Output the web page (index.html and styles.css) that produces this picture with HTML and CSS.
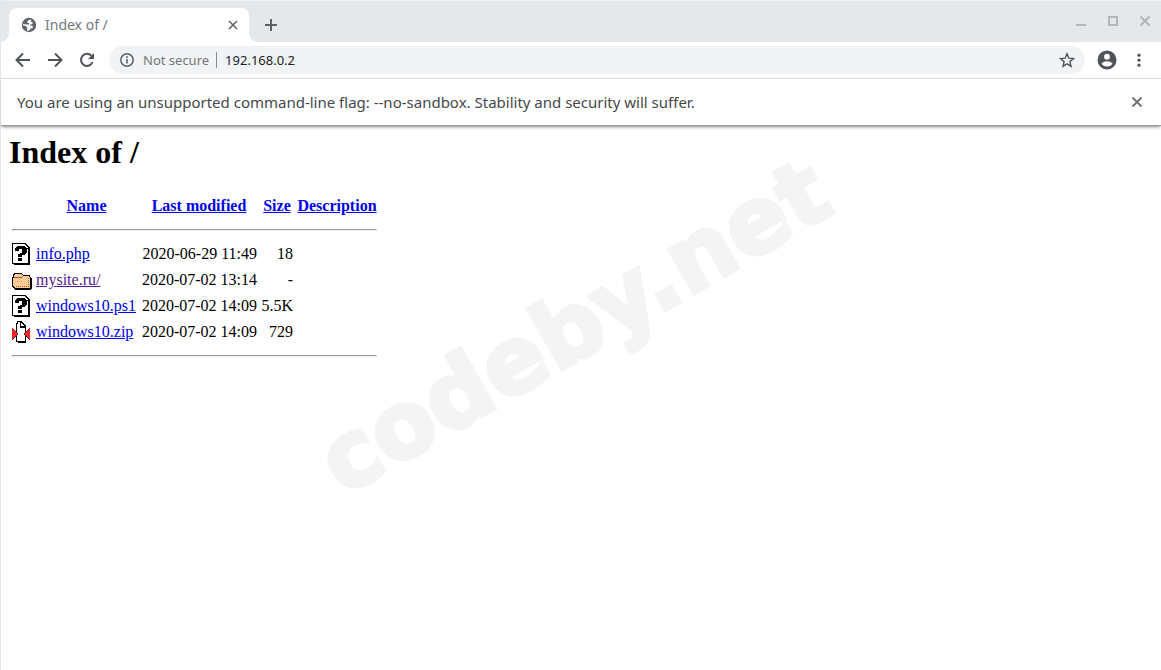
FILE: index.html
```
<!DOCTYPE html>
<html lang="en">
<head>
  <meta charset="UTF-8">
  <meta name="viewport" content="width=device-width, initial-scale=1.0">
  <title>Index of /</title>
  <link rel="stylesheet" href="styles.css">
</head>
<body>
  <svg class="symbols" aria-hidden="true">
    <symbol id="unknown" viewBox="0 0 20 22">
      <path d="M0 0h13l5 5v17H2v-1H0z" fill="#000"/>
      <path d="M1 1h12v5h3v14H1z" fill="#fff"/>
      <path d="M13 2v3h3z" fill="#fff"/>
      <path d="M3 8V5l2-2h7l3 3v4l-3 2h-2v2H6v-3l3-1 1-1V6H7v2zM6 15h4v3H6z" fill="#000"/>
    </symbol>
    <symbol id="folder" viewBox="0 0 20 22">
      <path d="M2 4h7l2 2h7v2l2 1v10l-2 2H3l-3-3V8h1V5z" fill="#000"/>
      <path d="M3 5h6l2 2h6v2H2V6z" fill="#fc9"/>
      <path d="M1 9h8l2-1h7v10l-1 1H3l-2-2z" fill="#fc9"/>
      <path d="M2 8.500h7l2-1" fill="none" stroke="#963"/>
      <path d="M4 17.500h13M16.500 9v8" fill="none" stroke="#963" stroke-dasharray="1 1"/>
      <path d="M5 12.500h2M9 12.500h2" stroke="#c96" stroke-dasharray="1 1"/>
    </symbol>
    <symbol id="compressed" viewBox="0 0 20 22">
      <path d="M4 2h1V0h4l5 5v16l-1 1H6v-1H4z" fill="#000"/>
      <path d="M5 3h1V1h2v6h5v13H5z" fill="#fff"/>
      <path d="M9 2v3h3z" fill="#fff"/>
      <path d="M0 7l7 6-7 6zM18 7l-7 6 7 6z" fill="#622"/>
      <path d="M0 8l6 5-6 5zM18 8l-6 5 6 5z" fill="#f22"/>
    </symbol>
  </svg>

  <div class="browser">
    <header class="tab-strip">
      <div class="tab">
        <svg class="favicon" viewBox="0 0 16 16" width="16" height="16">
          <circle cx="8" cy="8" r="7.2" fill="#5f6368"/>
          <path d="M9.500 2.200 6.600 4l-.4 1.600 1.800.6v1.400H4.800L2 6.800v1.400l2.600.8 1.600 1.400L6 13.800h2l1.600-2.200h1.600L12 9.800l-1-1.200H8.600l.6-1.200 1.800-.2 1-1.600-1.600-.6z" fill="#fff"/>
        </svg>
        <span class="tab-title">Index of /</span>
        <button class="icon-button" aria-label="Close tab">
          <svg viewBox="0 0 16 16" width="16" height="16"><path d="M4 4l8 8M12 4l-8 8" stroke="#5f6368" stroke-width="1.6"/></svg>
        </button>
      </div>
      <button class="icon-button new-tab" aria-label="New tab">
        <svg viewBox="0 0 16 16" width="16" height="16"><path d="M8 2v12M2 8h12" stroke="#5f6368" stroke-width="2"/></svg>
      </button>
      <div class="window-buttons">
        <button class="icon-button" aria-label="Minimize">
          <svg viewBox="0 0 16 16" width="16" height="16"><path d="M3 12h10" stroke="#b3b6b8" stroke-width="2"/></svg>
        </button>
        <button class="icon-button" aria-label="Maximize">
          <svg viewBox="0 0 16 16" width="16" height="16"><path d="M4 4h8v8H4z" fill="none" stroke="#b3b6b8" stroke-width="2"/></svg>
        </button>
        <button class="icon-button" aria-label="Close window">
          <svg viewBox="0 0 16 16" width="16" height="16"><path d="M3.5 3.5l9 9M12.5 3.5l-9 9" stroke="#b3b6b8" stroke-width="2"/></svg>
        </button>
      </div>
    </header>

    <div class="toolbar">
      <button class="icon-button" aria-label="Back">
        <svg viewBox="0 0 16 16" width="16" height="16"><path d="M15 8H2M8 1.5 1.5 8 8 14.5" fill="none" stroke="#50545a" stroke-width="2"/></svg>
      </button>
      <button class="icon-button" aria-label="Forward">
        <svg viewBox="0 0 16 16" width="16" height="16"><path d="M1 8h13M8 1.5 14.5 8 8 14.5" fill="none" stroke="#50545a" stroke-width="2"/></svg>
      </button>
      <button class="icon-button" aria-label="Reload">
        <svg viewBox="0 0 16 16" width="16" height="16"><path d="M13.6 10A6 6 0 1 1 12.4 3.8" fill="none" stroke="#50545a" stroke-width="2"/><path d="M15 1v6H9z" fill="#50545a"/></svg>
      </button>
      <div class="address-bar">
        <svg viewBox="0 0 16 16" width="16" height="16"><circle cx="8" cy="8" r="6.2" fill="none" stroke="#5f6368" stroke-width="1.5"/><path d="M8 7v4.5M8 4.3v1.7" stroke="#5f6368" stroke-width="1.6"/></svg>
        <label class="security" for="url">Not secure</label>
        <input class="url" id="url" type="text" value="192.168.0.2">
        <button class="bookmark" aria-label="Bookmark this page">
          <svg viewBox="0 0 16 16" width="16" height="16"><path d="M8 1.8l1.8 4.4 4.700.4-3.600 3.100 1.100 4.600L8 11.800l-4 2.500 1.100-4.600L1.500 6.600l4.700-.4z" fill="none" stroke="#50545a" stroke-width="1.4"/></svg>
        </button>
      </div>
      <button class="icon-button" aria-label="Profile">
        <svg viewBox="0 0 20 20" width="20" height="20"><circle cx="10" cy="10" r="9.5" fill="#50545a"/><circle cx="10" cy="6.7" r="2.9" fill="#fff"/><path d="M4.400 13.800c1.200-1.900 3.700-2.600 5.600-2.600s4.400.7 5.600 2.600A6.600 6.600 0 0 1 10 16.600a6.600 6.600 0 0 1-5.600-2.800z" fill="#fff"/></svg>
      </button>
      <button class="icon-button" aria-label="Menu">
        <svg viewBox="0 0 16 16" width="16" height="16"><g fill="#50545a"><circle cx="8" cy="3.200" r="1.600"/><circle cx="8" cy="8.200" r="1.600"/><circle cx="8" cy="13.200" r="1.600"/></g></svg>
      </button>
    </div>

    <div class="infobar">
      <span>You are using an unsupported command-line flag: --no-sandbox. Stability and security will suffer.</span>
      <button class="icon-button" aria-label="Dismiss">
        <svg viewBox="0 0 16 16" width="16" height="16"><path d="M3.500 3.500l9 9M12.500 3.500l-9 9" stroke="#6e7175" stroke-width="1.800"/></svg>
      </button>
    </div>

    <main class="page">
      <div class="watermark">codeby.net</div>
      <h1>Index of /</h1>
      <table class="listing">
        <tr>
          <th class="icon"></th>
          <th class="name"><a href="#">Name</a></th>
          <th class="date"><a href="#">Last modified</a></th>
          <th class="size"><a href="#">Size</a></th>
          <th class="description"><a href="#">Description</a></th>
        </tr>
        <tr><td colspan="5"><hr></td></tr>
        <tr>
          <td class="icon"><svg width="20" height="22"><use href="#unknown"/></svg></td>
          <td><a href="#">info.php</a></td>
          <td class="num">2020-06-29 11:49</td>
          <td class="num">18</td>
          <td></td>
        </tr>
        <tr>
          <td class="icon"><svg width="20" height="22"><use href="#folder"/></svg></td>
          <td><a class="visited" href="#">mysite.ru/</a></td>
          <td class="num">2020-07-02 13:14</td>
          <td class="num">-</td>
          <td></td>
        </tr>
        <tr>
          <td class="icon"><svg width="20" height="22"><use href="#unknown"/></svg></td>
          <td><a href="#">windows10.ps1</a></td>
          <td class="num">2020-07-02 14:09</td>
          <td class="num">5.5K</td>
          <td></td>
        </tr>
        <tr>
          <td class="icon"><svg width="20" height="22"><use href="#compressed"/></svg></td>
          <td><a href="#">windows10.zip</a></td>
          <td class="num">2020-07-02 14:09</td>
          <td class="num">729</td>
          <td></td>
        </tr>
        <tr><td colspan="5"><hr></td></tr>
      </table>
    </main>
  </div>
</body>
</html>
```

FILE: styles.css
```
body {
  margin: 0;
  background: #fff;
  font-family: "Noto Sans", sans-serif;
}
.symbols {
  display: none;
}
.browser {
  min-height: 100vh;
  box-sizing: border-box;
  border-left: 1px solid #e4e7ea;
}
.icon-button,
.bookmark {
  display: flex;
  justify-content: center;
  padding: 0;
  border: none;
  background: none;
}

/* tabs */
.tab-strip {
  display: flex;
  align-items: center;
  height: 42px;
  background: #e5e8eb;
  box-shadow: inset 0 1px #eef0f2;
}
.tab {
  position: relative;
  display: flex;
  align-items: center;
  align-self: flex-end;
  width: 240px;
  height: 34px;
  margin: 0 14px 0 8px;
  padding: 0 8px 0 12px;
  box-sizing: border-box;
  gap: 8px;
  background: #fff;
  border-radius: 8px 8px 0 0;
  font-size: 14px;
  line-height: 18px;
  color: #75787c;
}
.tab::before,
.tab::after {
  content: "";
  position: absolute;
  bottom: 0;
  width: 8px;
  height: 8px;
}
.tab::before {
  right: 100%;
  background: radial-gradient(circle at 0 0, transparent 7px, #fff 8px);
}
.tab::after {
  left: 100%;
  background: radial-gradient(circle at 100% 0, transparent 7px, #fff 8px);
}
.tab-title {
  flex: 1;
}
.new-tab {
  padding-top: 8px;
}
.window-buttons {
  display: flex;
  gap: 16px;
  margin-left: auto;
  padding-right: 8px;
}

/* toolbar */
.toolbar {
  display: flex;
  align-items: center;
  height: 36px;
  padding: 0 6px;
  border-bottom: 1px solid #dadce0;
}
.toolbar .icon-button {
  width: 32px;
}
.address-bar {
  display: flex;
  flex: 1;
  align-items: center;
  height: 28px;
  margin: 0 6px;
  padding: 0 10px;
  gap: 8px;
  border-radius: 14px;
  background: #f1f3f4;
  font-size: 13px;
}
.security {
  padding-right: 7px;
  border-right: 1px solid #85888c;
  line-height: 16px;
  color: #75787c;
}
.url {
  flex: 1;
  padding: 0;
  border: none;
  background: none;
  font: inherit;
  color: #202124;
}
.infobar {
  display: flex;
  align-items: center;
  justify-content: space-between;
  height: 46px;
  padding: 0 16px;
  border-bottom: 1px solid #999;
  font-size: 15px;
  line-height: 20px;
  color: #45484c;
  box-shadow: 0 2px 3px -1px #888;
}

/* directory listing */
.page {
  position: relative;
  padding: 8px;
  font-family: "Liberation Serif", serif;
}
h1 {
  margin: 0 0 21px;
  font-size: 32px;
  line-height: 37px;
}
.listing {
  position: relative;
}
.icon {
  width: 20px;
  height: 22px;
}
.icon svg {
  display: block;
  shape-rendering: crispEdges;
}
.name {
  width: 101px;
}
.date {
  width: 116px;
}
.size {
  width: 32px;
}
.description {
  width: 80px;
}
.num {
  text-align: right;
}
a {
  color: #0000ee;
}
a.visited {
  color: #551a8b;
}
.watermark {
  position: absolute;
  left: 288px;
  top: 146px;
  font: bold 92px/110px "DejaVu Sans", sans-serif;
  color: #f4f4f4;
  -webkit-text-stroke: 4px #f4f4f4;
  transform: rotate(-30deg);
}
```
